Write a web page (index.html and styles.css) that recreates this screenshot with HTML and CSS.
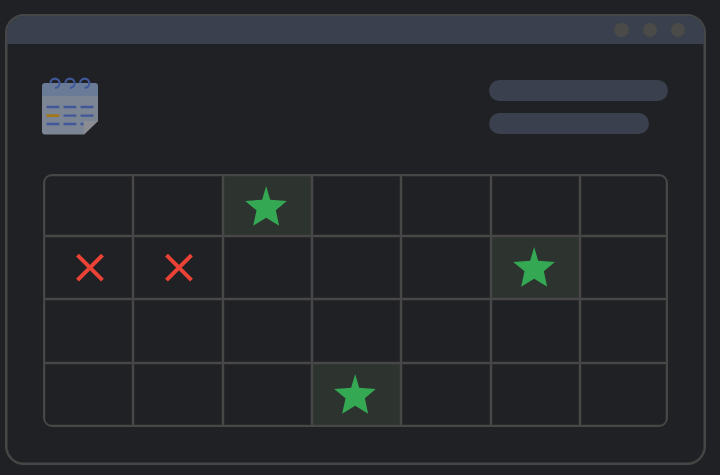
FILE: index.html
```html
<!DOCTYPE html>
<html lang="en">
<head>
<meta charset="utf-8">
<title>Calendar</title>
<link rel="stylesheet" href="styles.css">
</head>
<body>
<svg class="defs" aria-hidden="true">
  <symbol id="star" viewBox="0 0 125 120"><path d="M63 0 75 41 125 45 92 73 102 119 63 95 24 119 34 73 0 45 51 41Z"/></symbol>
  <symbol id="cross" viewBox="0 0 28 28"><path d="M1.5 1.2 26.5 26.2M26.5 1.2 1.5 26.2"/></symbol>
</svg>
<main class="window">
  <header class="titlebar"><i class="dot"></i><i class="dot"></i><i class="dot"></i></header>
  <section class="summary">
    <svg class="calendar" viewBox="0 0 56 58">
      <path fill="#7c8593" d="M0 17H56V44L42 57.5H3Q0 57.5 0 54.5Z"/>
      <path fill="#697b97" d="M0 19V9Q0 6 3 6H53Q56 6 56 9V19Z"/>
      <g fill="none" stroke="#40589a" stroke-width="2.2">
        <path id="ring" d="M8.4 6.2A4.6 4.6 0 1 1 13 10.8"/>
        <use href="#ring" x="15"/><use href="#ring" x="29.7"/>
      </g>
      <path stroke="#40589a" stroke-width="2.4" d="M4.5 30H17.3M21.5 30H34.3M38.5 30H51.5M21.5 38.6H34.3M38.5 38.6H51.5M4.5 47H17.3M21.5 47H34.3M38.5 47H41.5"/>
      <path stroke="#a3761a" stroke-width="2.6" d="M4.5 38.6H17.3"/>
      <path fill="#8b8d92" d="M42 57.5V46.5Q42 44 44.5 44H56Z"/>
    </svg>
    <div class="lines"><div class="line"></div><div class="line short"></div></div>
  </section>
  <section class="grid">
    <div class="cell"></div><div class="cell"></div>
    <div class="cell good"><svg class="star"><use href="#star"/></svg></div>
    <div class="cell"></div><div class="cell"></div><div class="cell"></div><div class="cell"></div>
    <div class="cell"><svg class="cross"><use href="#cross"/></svg></div>
    <div class="cell"><svg class="cross"><use href="#cross"/></svg></div>
    <div class="cell"></div><div class="cell"></div><div class="cell"></div>
    <div class="cell good"><svg class="star raised"><use href="#star"/></svg></div>
    <div class="cell"></div>
    <div class="cell"></div><div class="cell"></div><div class="cell"></div><div class="cell"></div><div class="cell"></div><div class="cell"></div><div class="cell"></div>
    <div class="cell"></div><div class="cell"></div><div class="cell"></div>
    <div class="cell good"><svg class="star raised"><use href="#star"/></svg></div>
    <div class="cell"></div><div class="cell"></div><div class="cell"></div>
  </section>
</main>
</body>
</html>
```
FILE: styles.css
```css
* { box-sizing: border-box; }
body {
  margin: 0;
  height: 475px;
  padding: 14px 15px 10px 5px;
  overflow: hidden;
  background: #202124;
}
.defs { display: none; }
.window {
  width: 701px;
  height: 451px;
  border: 2px solid #464746;
  border-radius: 19px;
  box-shadow: inset 0 0 0 .5px #464746;
  overflow: hidden;
}
.titlebar {
  height: 28px;
  padding: 0 19px 0 0;
  display: flex;
  justify-content: flex-end;
  align-items: center;
  gap: 14px;
  background: #3b404f;
}
.dot {
  width: 14.2px;
  height: 14.2px;
  border-radius: 50%;
  background: #4a4b48;
}
.summary {
  display: flex;
  justify-content: space-between;
  height: 130px;
  padding: 33px 36px 0 35px;
}
.calendar { width: 56px; height: 58px; }
.lines {
  display: grid;
  align-content: start;
  gap: 12px;
  width: 179px;
  padding-top: 3px;
}
.line {
  height: 21px;
  border-radius: 11px;
  background: #3b404f;
}
.short { width: 160px; }
.grid {
  display: grid;
  grid-template-columns: 87px 88px 87px 87px 88px 87px 85px;
  grid-template-rows: 59px 61px 62px 61px;
  gap: 2px;
  width: 625px;
  margin-left: 36px;
  border: 2px solid #464746;
  border-radius: 9px;
  background: #464746;
  overflow: hidden;
}
.cell {
  display: flex;
  align-items: center;
  justify-content: center;
  background: #202124;
  box-shadow: inset 0 0 0 1px rgba(70, 71, 70, .25);
}
.good { background: #2d332e; }
.star {
  width: 42px;
  height: 40px;
  margin-right: 3px;
  fill: #35a854;
}
.raised { margin-bottom: 2px; }
.cross {
  width: 28px;
  height: 28px;
  margin-left: 2px;
  fill: none;
  stroke: #ea4335;
  stroke-width: 4;
}
```
